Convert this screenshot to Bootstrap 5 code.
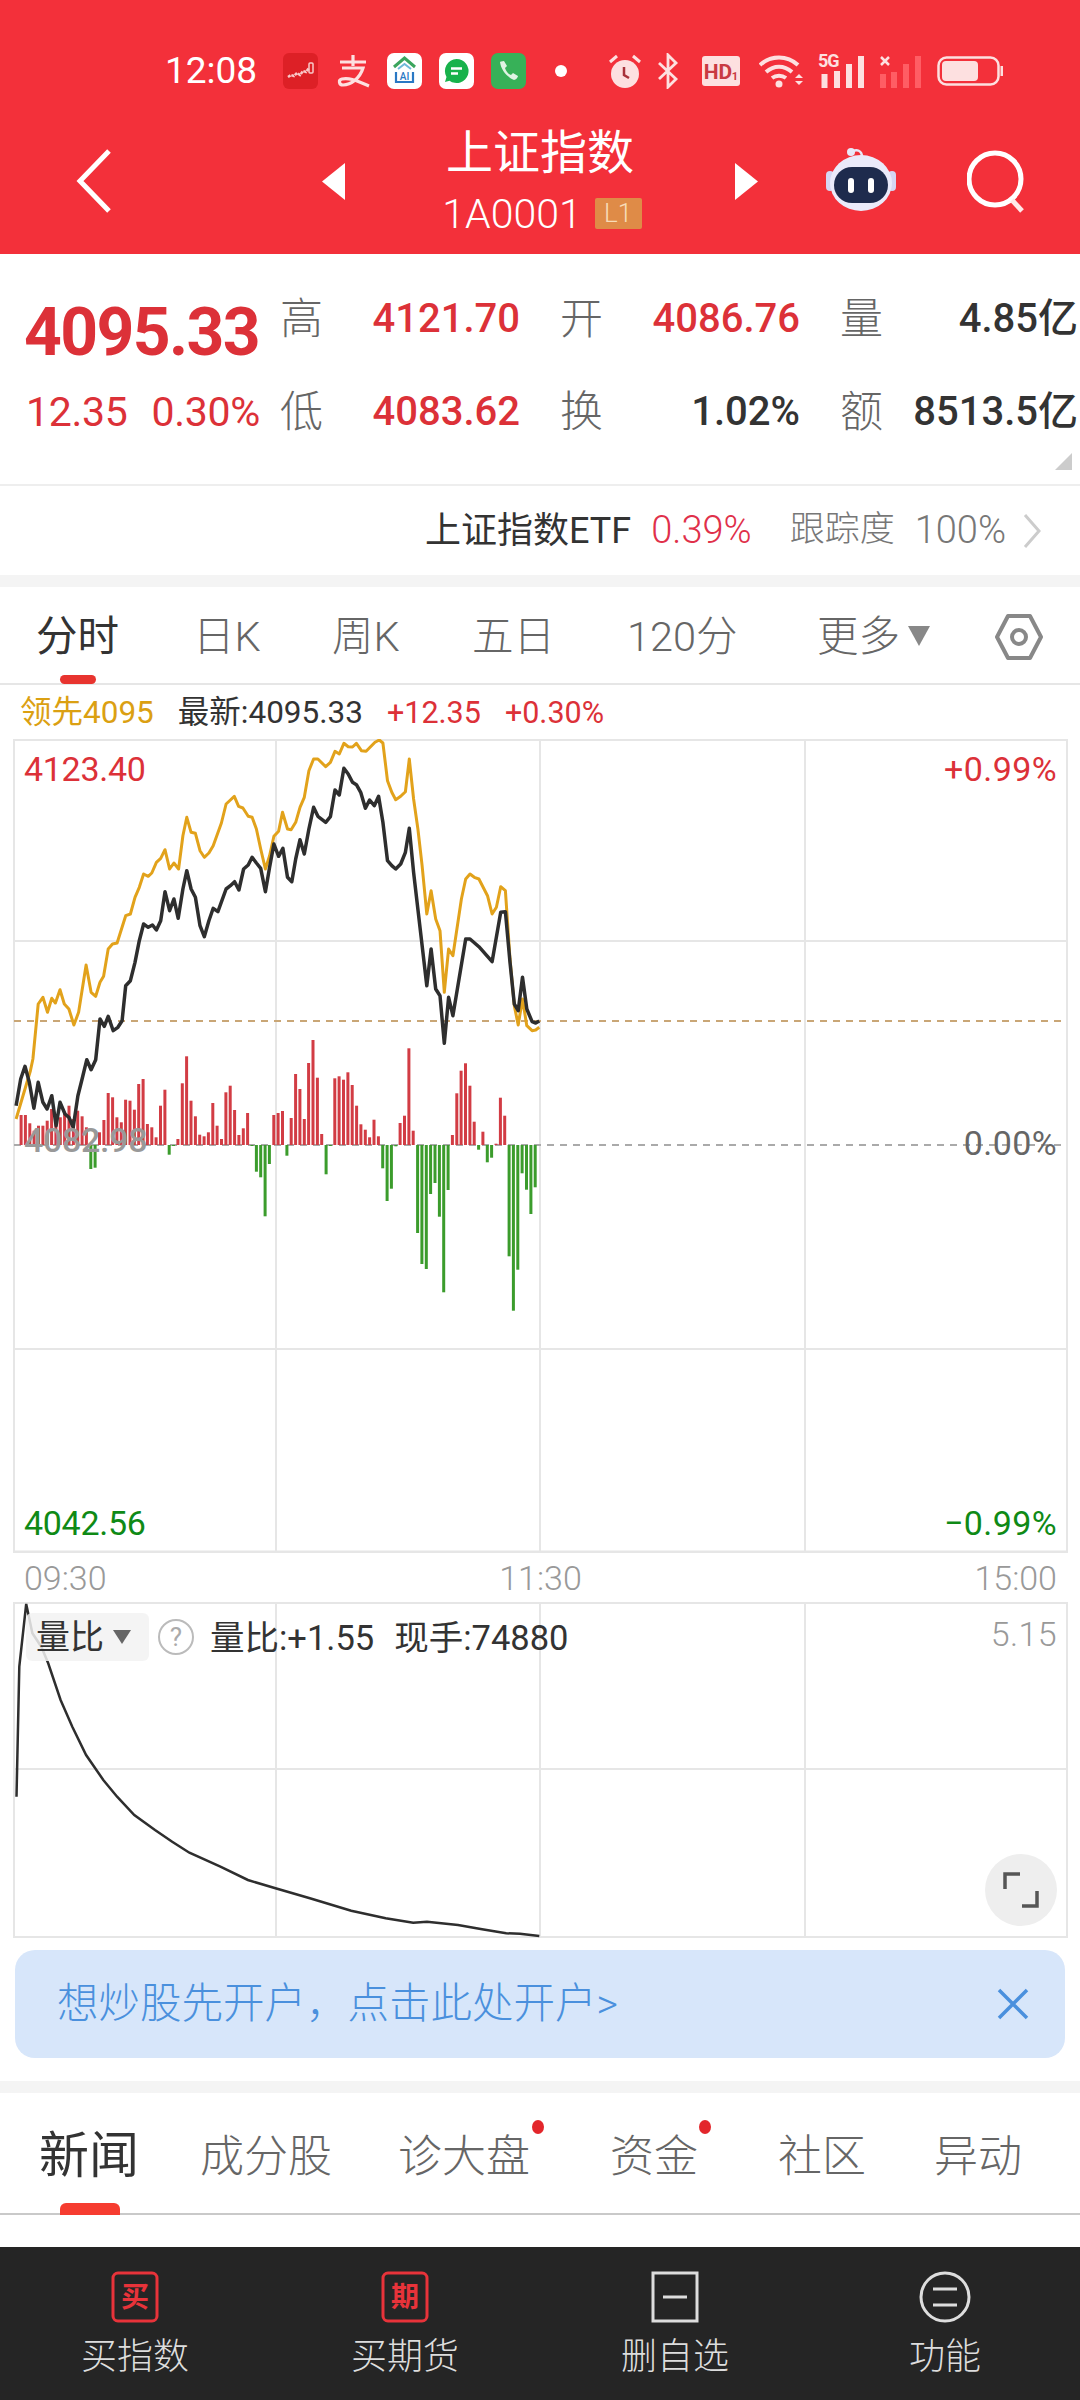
<!DOCTYPE html>
<html lang="zh-CN">
<head>
<meta charset="UTF-8">
<meta name="viewport" content="width=device-width, initial-scale=1.0">
<title>上证指数</title>
<link href="https://cdn.jsdelivr.net/npm/bootstrap@5.3.3/dist/css/bootstrap.min.css" rel="stylesheet" crossorigin="anonymous">
<script src="https://cdn.jsdelivr.net/npm/bootstrap@5.3.3/dist/js/bootstrap.bundle.min.js" crossorigin="anonymous"></script>
<style>
body { width:1080px; height:2400px; margin:0; overflow:hidden; background:#fff; font-family:Roboto,"Noto Sans CJK SC",sans-serif; color:#333; }
svg { display:block; }
.up { color:#dc3138; }
.down { color:#0f8a16; }
.muted { color:#999; }

/* header */
.app-head { height:254px; background:#f3303a; color:#fff; }
.status-row { height:50px; padding-left:165px; position:relative; top:46px; }
.status-time { font-size:37px; width:118px; line-height:50px; }
.title-row { display:grid; grid-template-columns:322px 23px 390px 23px 67px 72px 70px 58px; align-items:center; height:130px; position:relative; top:66px; }
.back-btn { padding-left:76px; }
.title-main { font-size:47px; line-height:56px; font-weight:400; margin-bottom:9px; }
.title-code { font-size:41px; line-height:48px; font-weight:300; gap:13px; padding-left:4px; }
.lv-tag { background:#df8b47; color:#f8dcb8; font-size:26px; width:47px; height:31px; line-height:31px; border-radius:2px; text-align:center; }

/* quote */
.quote-box { height:232px; display:grid; grid-template-columns:280px 52px 188px 40px 40px 200px 40px 40px 198px; grid-template-rows:46px 46px; row-gap:47px; padding-top:42px; border-bottom:2px solid #eee; position:relative; align-content:start; }
.price-big { font-size:66px; font-weight:700; padding-left:24px; letter-spacing:-1.6px; line-height:46px; color:#dc3138; margin-top:14px; }
.price-sub { font-size:41px; padding-left:26px; color:#dc3138; letter-spacing:-.3px; line-height:46px; white-space:nowrap; }
.price-sub span { margin-left:24px; }
.q-label { font-size:43px; color:#666; line-height:46px; font-weight:300; }
.q-val { font-size:40px; text-align:right; line-height:46px; font-weight:500; white-space:nowrap; }
.q-dark { color:#333; }
.q-corner { position:absolute; right:8px; bottom:14px; width:0; height:0; border-left:17px solid transparent; border-bottom:17px solid #ccc; }

/* etf */
.etf-row { height:89px; padding-right:38px; font-size:36px; }
.etf-pct { color:#e0304a; font-size:38px; font-weight:300; margin-left:20px; margin-right:38px; }
.etf-grey { color:#777; font-weight:300; font-size:35px; }
.etf-num { font-size:38px; margin-left:20px; }
.gap-band { height:12px; background:#f4f4f4; }

/* period tabs */
.period-tabs { display:grid; grid-template-columns:157px 139px 140px 155px 190px 177px 1fr; height:98px; padding:4px 0 0 36px; border-bottom:2px solid #e6e6e6; align-items:center; font-size:41.500px; color:#666; font-weight:300; position:relative; }
.period-tabs .on { color:#333; font-weight:400; position:relative; }
.period-tabs .on::after { content:""; position:absolute; left:24px; bottom:-16px; width:36px; height:9px; border-radius:5px; background:#e8342f; }
.more-caret { display:inline-block; width:0; height:0; border-left:11px solid transparent; border-right:11px solid transparent; border-top:20px solid #888; margin-left:8px; position:relative; top:-5px; }

/* chart info */
.info-row { height:54px; padding:1px 0 0 20px; font-size:31.500px; align-items:center; gap:24px; }
.info-row .up { font-size:30.500px; }
.lead-tag { color:#dba012; }
.chart-main { position:relative; height:814px; }
.chart-tag { position:absolute; font-size:34px; line-height:40px; letter-spacing:.4px; }
.left-tag { letter-spacing:-.3px; }
.base-tag { color:#999; font-weight:500; }
.time-row { height:49px; padding:0 23px 0 24px; font-size:34px; color:#999; font-weight:300; line-height:50px; }
.chart-sub { position:relative; height:336px; }
.ratio-pick { position:absolute; left:26px; top:11px; width:123px; height:48px; background:rgba(242,242,242,.85); border-radius:6px; font-size:34px; line-height:48px; padding-left:10px; color:#333; }
.ratio-pick i { display:inline-block; width:0; height:0; border-left:9px solid transparent; border-right:9px solid transparent; border-top:14px solid #666; margin-left:9px; position:relative; top:-5px; }
.ratio-help { position:absolute; left:158px; top:17px; width:36px; height:36px; border:2px solid #bbb; border-radius:50%; text-align:center; color:#aaa; font-size:26px; line-height:32px; }
.ratio-text { position:absolute; left:210px; top:14px; font-size:34.500px; line-height:44px; gap:20px; white-space:nowrap; }
.expand-btn { position:absolute; left:985px; top:252px; width:72px; height:72px; background:#eee; border-radius:50%; }

/* open account banner */
.open-banner { height:108px; margin:12px 15px 0; background:#d7e6fa; border-radius:20px; color:#4a90dd; font-size:41.500px; padding:0 36px 0 42px; font-weight:300; }
.news-tabs { position:relative; height:122px; border-bottom:2px solid #c9c9c9; font-size:44px; color:#666; font-weight:300; }
.news-tabs span { position:absolute; top:36px; line-height:56px; white-space:nowrap; }
.news-tabs .on { font-size:50px; color:#333; left:39px; top:35px; font-weight:400; }
.news-mark { position:absolute; left:60px; bottom:-2px; width:60px; height:12px; border-radius:6px 6px 0 0; background:#f63c30; }
.news-dot { position:absolute; top:27px; width:12px; height:14px; border-radius:50%; background:#e3262b; }

/* bottom bar */
.foot-bar { position:absolute; left:0; right:0; top:2247px; height:153px; background:#252525; color:#ddd; font-size:36px; font-weight:300; }
.foot-icon { height:52px; margin:24px auto 7px; }
</style>
</head>
<body>

<header class="app-head">
  <div class="status-row d-flex align-items-center">
    <div class="status-time">12:08</div>
    <div class="d-flex align-items-center">
      <svg width="35" height="36" viewBox="0 0 35 36" style="margin-right:19px"><rect width="35" height="36" rx="6" fill="#dd2026"/><path d="M5 24l3-2 3 1 3-3 3 2 3-4 3 1 3-4" fill="none" stroke="#f9c9c9" stroke-width="2.500" stroke-dasharray="3 1"/><rect x="26" y="10" width="4" height="10" rx="1" fill="none" stroke="#f9c9c9" stroke-width="1.500"/></svg>
      <svg width="34" height="34" viewBox="0 0 34 34" style="margin-right:16px"><path d="M16 1v11M3 8h26M5 14h21C23 24 14 31 6 31c-4 0-5-5-1-6 8-2 17 3 27 7" fill="none" stroke="#fde0e0" stroke-width="3.200"/></svg>
      <svg width="35" height="36" viewBox="0 0 35 36" style="margin-right:17px"><rect width="35" height="36" rx="7" fill="#fff"/><path d="M7 14L17.500 5 28 14" fill="none" stroke="#3ba55d" stroke-width="3"/><path d="M9 19v10h17V19" fill="none" stroke="#2a78c4" stroke-width="2.200"/><path d="M11 16l6.500-5 6.500 5" fill="none" stroke="#6fb8d8" stroke-width="2"/><text x="17.500" y="27" font-size="10" font-weight="500" text-anchor="middle" fill="#2a78c4" font-family="Roboto">AI</text></svg>
      <svg width="35" height="36" viewBox="0 0 35 36" style="margin-right:17px"><rect width="35" height="36" rx="7" fill="#fff"/><path d="M17.500 6a12 12 0 1 1-7 21.700L6 29l1.500-5A12 12 0 0 1 17.500 6z" fill="#18b24b"/><path d="M12 15.500h11M12 20.500h7" stroke="#fff" stroke-width="2.500"/></svg>
      <svg width="35" height="36" viewBox="0 0 35 36" style="margin-right:29px"><rect width="35" height="36" rx="7" fill="#37b158"/><path d="M9 9c1 8 7 15 14 18 2 0 4-3 4-4l-5-3-2 2c-3-1-5-4-6-7l2-2-3-5c-2 0-4 1-4 1z" fill="#dff3e3"/></svg>
      <svg width="12" height="12" style="margin-right:41px"><circle cx="6" cy="6" r="6" fill="#fff"/></svg>
      <svg width="34" height="36" viewBox="0 0 34 36" style="margin-right:14px"><circle cx="17" cy="21" r="14" fill="#fde0e0"/><path d="M16 14v8l5 3" fill="none" stroke="#a8323a" stroke-width="2.500"/><path d="M2 9l7-6M32 9l-7-6" stroke="#fde0e0" stroke-width="3"/></svg>
      <svg width="24" height="36" viewBox="0 0 24 36" style="margin-right:22px"><path d="M3 10l17 16-8 8V2l8 8L3 26" fill="none" stroke="#fde0e0" stroke-width="2.800"/></svg>
      <svg width="38" height="30" viewBox="0 0 38 30" style="margin-right:19px"><rect width="38" height="30" rx="3" fill="#fde0e0"/><text x="16" y="23" font-size="21" font-weight="700" text-anchor="middle" fill="#c93a42" font-family="Roboto">HD</text><text x="33" y="24" font-size="11" font-weight="700" text-anchor="middle" fill="#c93a42" font-family="Roboto">1</text></svg>
      <svg width="44" height="34" viewBox="0 0 44 34" style="margin-right:15px"><path d="M1 11c11-10 27-10 38 0M7 18c8-7 18-7 26 0M13 24c4-3 10-3 14 0" fill="none" stroke="#fde0e0" stroke-width="4"/><circle cx="20" cy="30" r="3.500" fill="#fde0e0"/><path d="M36 24l4-4 4 4zM36 27l4 4 4-4z" fill="#fde0e0"/></svg>
      <div class="position-relative" style="width:47px;height:34px;margin-right:14px">
        <svg width="47" height="34" viewBox="0 0 47 34"><path d="M6.500 34V20M19 34V17M31 34V10M43 34V2" stroke="#fde0e0" stroke-width="6"/></svg>
        <span class="position-absolute" style="left:0;top:-7px;font-size:18px;font-weight:700;color:#fde0e0;letter-spacing:-1px">5G</span>
      </div>
      <svg width="42" height="34" viewBox="0 0 42 34" style="margin-right:16px"><path d="M4 34V20M15 34V18M27 34V10M39 34V2" stroke="#ff5d64" stroke-width="6"/><path d="M2 3l8 8M10 3l-8 8" stroke="#fde0e0" stroke-width="2.500"/></svg>
      <svg width="66" height="30" viewBox="0 0 66 30"><rect x="1.500" y="1.500" width="60" height="27" rx="8" fill="none" stroke="#fde0e0" stroke-width="2.500"/><rect x="5" y="5" width="36" height="20" rx="4" fill="#fde0e0"/><path d="M65 10v10" stroke="#fde0e0" stroke-width="3"/></svg>
    </div>
  </div>
  <div class="title-row">
    <div class="back-btn"><svg width="36" height="66" viewBox="0 0 36 66"><path d="M33 3L4 33l29 30" fill="none" stroke="#fff" stroke-width="5"/></svg></div>
    <svg width="23" height="37" viewBox="0 0 23 37"><path d="M23 0v37L0 18.500z" fill="#fff"/></svg>
    <div class="d-flex flex-column align-items-center">
      <div class="title-main">上证指数</div>
      <div class="title-code d-flex align-items-center">1A0001<span class="lv-tag">L1</span></div>
    </div>
    <svg width="23" height="37" viewBox="0 0 23 37"><path d="M0 0v37l23-18.500z" fill="#fff"/></svg>
    <div></div>
    <svg width="72" height="68" viewBox="0 0 72 68"><path d="M26 5c6-4 11-1 11 5" fill="none" stroke="#e8e8f8" stroke-width="2.500"/><circle cx="26" cy="5" r="4" fill="#e8e8f8"/><rect x="1" y="24" width="8" height="20" rx="4" fill="#d5d6f3"/><rect x="63" y="24" width="8" height="20" rx="4" fill="#d5d6f3"/><ellipse cx="36" cy="36" rx="31" ry="28" fill="#eaeafa"/><rect x="9" y="20" width="54" height="36" rx="18" fill="#1e2b4d"/><rect x="23" y="31" width="6" height="15" rx="3" fill="#fff"/><rect x="43" y="31" width="6" height="15" rx="3" fill="#fff"/></svg>
    <div></div>
    <svg width="60" height="64" viewBox="0 0 60 64"><circle cx="28" cy="30" r="26" fill="none" stroke="#fff" stroke-width="5"/><path d="M45 51l10 11" stroke="#ffe9e9" stroke-width="5"/></svg>
  </div>
</header>

<section class="quote-box">
  <div class="price-big">4095.33</div>
  <div class="q-label">高</div><div class="q-val up">4121.70</div><div></div><div class="q-label">开</div><div class="q-val up">4086.76</div><div></div><div class="q-label">量</div><div class="q-val q-dark">4.85亿</div>
  <div class="price-sub">12.35<span>0.30%</span></div>
  <div class="q-label">低</div><div class="q-val up">4083.62</div><div></div><div class="q-label">换</div><div class="q-val q-dark">1.02%</div><div></div><div class="q-label">额</div><div class="q-val q-dark">8513.5亿</div>
  <div class="q-corner"></div>
</section>

<section class="etf-row d-flex align-items-center justify-content-end">
  <span>上证指数ETF</span>
  <span class="etf-pct">0.39%</span>
  <span class="etf-grey">跟踪度</span>
  <span class="etf-grey etf-num">100%</span>
  <svg class="ms-3" width="20" height="36" viewBox="0 0 20 36"><path d="M3 2l14 16L3 34" fill="none" stroke="#ccc" stroke-width="3"/></svg>
</section>
<div class="gap-band"></div>

<nav class="period-tabs">
  <span class="on">分时</span><span>日K</span><span>周K</span><span>五日</span><span>120分</span>
  <span>更多<i class="more-caret"></i></span>
  <svg width="50" height="48" viewBox="0 0 50 48"><path d="M14 3h22l11 21-11 21H14L3 24z" fill="none" stroke="#888" stroke-width="4" stroke-linejoin="round"/><circle cx="25" cy="24" r="7" fill="none" stroke="#888" stroke-width="4"/></svg>
</nav>

<div class="info-row d-flex">
  <span class="lead-tag">领先4095</span>
  <span>最新:4095.33</span>
  <span class="up">+12.35</span>
  <span class="up">+0.30%</span>
</div>

<div class="chart-main">
  <svg id="priceChart" width="1080" height="814" viewBox="0 740 1080 814"></svg>
  <span class="chart-tag left-tag up" style="left:24px;top:10px">4123.40</span>
  <span class="chart-tag up" style="right:23px;top:10px">+0.99%</span>
  <span class="chart-tag left-tag base-tag" style="left:24px;top:381px">4082.98</span>
  <span class="chart-tag" style="right:23px;top:384px;color:#666">0.00%</span>
  <span class="chart-tag left-tag down" style="left:24px;top:764px">4042.56</span>
  <span class="chart-tag down" style="right:23px;top:764px">−0.99%</span>
</div>

<div class="time-row d-flex justify-content-between"><span>09:30</span><span>11:30</span><span>15:00</span></div>

<div class="chart-sub">
  <svg id="ratioChart" width="1080" height="336" viewBox="0 1602 1080 336"></svg>
  <div class="ratio-pick">量比<i></i></div>
  <div class="ratio-help">?</div>
  <div class="ratio-text d-flex"><span>量比:+1.55</span><span>现手:74880</span></div>
  <span class="chart-tag muted" style="right:23px;top:12px;font-weight:300">5.15</span>
  <div class="expand-btn d-flex align-items-center justify-content-center">
    <svg width="36" height="36" viewBox="0 0 36 36"><path d="M2 17V2h15M34 19v15H19" fill="none" stroke="#555" stroke-width="3.500"/></svg>
  </div>
</div>

<div class="open-banner d-flex align-items-center justify-content-between">
  <span>想炒股先开户&#xFF0C;点击此处开户&gt;</span>
  <svg width="32" height="32" viewBox="0 0 32 32"><path d="M2 2l28 28M30 2L2 30" stroke="#4a90dd" stroke-width="3.500"/></svg>
</div>

<div class="gap-band" style="margin-top:23px"></div>

<nav class="news-tabs">
  <span class="on">新闻</span>
  <span style="left:200px">成分股</span>
  <span style="left:398px">诊大盘</span>
  <span style="left:610px">资金</span>
  <span style="left:778px">社区</span>
  <span style="left:934px">异动</span>
  <i class="news-dot" style="left:532px"></i>
  <i class="news-dot" style="left:699px"></i>
  <i class="news-mark"></i>
</nav>

<footer class="foot-bar row g-0 text-center">
  <div class="col-3">
    <svg class="foot-icon" width="48" height="52" viewBox="0 0 48 52"><rect x="2" y="2" width="44" height="48" rx="5" fill="none" stroke="#e8333a" stroke-width="3"/><text x="24" y="36" font-size="28" font-weight="700" text-anchor="middle" fill="#e8333a" font-family="'Noto Sans CJK SC'">买</text></svg>
    <div>买指数</div>
  </div>
  <div class="col-3">
    <svg class="foot-icon" width="48" height="52" viewBox="0 0 48 52"><rect x="2" y="2" width="44" height="48" rx="5" fill="none" stroke="#e8333a" stroke-width="3"/><text x="24" y="36" font-size="28" font-weight="700" text-anchor="middle" fill="#e8333a" font-family="'Noto Sans CJK SC'">期</text></svg>
    <div>买期货</div>
  </div>
  <div class="col-3">
    <svg class="foot-icon" width="48" height="52" viewBox="0 0 48 52"><rect x="2" y="2" width="44" height="48" fill="none" stroke="#ddd" stroke-width="3"/><path d="M12 26h24" stroke="#ddd" stroke-width="3"/></svg>
    <div>删自选</div>
  </div>
  <div class="col-3">
    <svg class="foot-icon" width="52" height="52" viewBox="0 0 52 52"><circle cx="26" cy="26" r="24" fill="none" stroke="#ddd" stroke-width="3"/><path d="M14 18h24M14 34h24" stroke="#ddd" stroke-width="3"/></svg>
    <div>功能</div>
  </div>
</footer>

<script>
// traces were read off the picture: x*2.8, (y-720)*3
const goldLine = [45,1200,85,1055,92,1020,107,855,120,835,133,880,145,838,155,852,168,812,180,855,193,870,207,918,220,880,241,738,255,820,268,832,280,790,290,772,303,690,315,675,328,672,352,590,365,585,378,535,390,505,402,465,415,472,425,462,438,430,450,418,462,392,475,450,487,432,500,450,512,350,523,295,535,340,547,343,560,395,572,415,585,402,597,380,620,312,633,255,645,243,656,232,668,262,680,267,695,292,706,295,718,330,730,390,743,450,755,410,767,352,780,337,791,280,805,330,815,332,828,310,840,265,852,235,865,155,878,120,890,120,912,143,925,130,938,97,950,105,963,73,975,83,987,84,998,73,1012,95,1025,97,1050,70,1062,63,1072,72,1085,185,1097,220,1108,242,1122,232,1135,218,1146,120,1158,240,1170,330,1182,440,1195,585,1207,515,1220,600,1232,635,1244,820,1256,690,1268,710,1292,540,1304,480,1316,465,1328,475,1341,480,1365,530,1378,585,1390,565,1402,503,1415,515,1428,720,1440,860,1451,918,1463,840,1475,920,1490,935,1500,933,1510,925];
const blackLine = [45,1160,58,1080,70,1042,82,1090,95,1168,107,1090,120,1150,132,1170,145,1130,157,1220,168,1150,182,1185,193,1195,205,1225,218,1130,230,1080,243,1022,255,1052,268,1022,280,900,292,922,303,892,317,935,330,925,342,905,352,800,365,785,378,730,390,665,402,615,415,625,427,618,438,633,450,605,462,518,475,575,487,540,499,598,512,510,523,455,535,510,547,535,560,620,572,653,585,605,597,568,610,578,633,510,645,500,657,488,669,513,682,450,695,438,706,415,718,432,730,448,743,518,755,445,767,375,780,412,792,388,805,475,817,488,828,420,840,362,852,405,865,330,878,265,890,292,912,310,925,293,938,213,950,228,963,148,975,165,987,190,998,197,1010,220,1023,268,1035,243,1048,260,1060,232,1072,310,1085,425,1097,440,1108,450,1122,435,1135,400,1146,328,1158,460,1195,800,1207,690,1220,810,1232,830,1244,973,1256,835,1268,890,1304,660,1316,660,1341,683,1378,728,1402,580,1415,578,1428,730,1440,855,1451,875,1463,775,1475,870,1490,908,1500,912,1510,906];
// volume bars, top edge y of each one at x*2.8; baseline is y=318, bars below it are green
const barTops = [228,228,253,275,260,260,245,210,225,235,225,200,240,215,232,265,390,386,280,243,162,175,235,250,182,185,212,135,120,255,265,295,200,152,347,321,300,133,52,185,232,287,292,280,192,260,300,160,140,213,288,268,222,321,398,415,532,375,228,222,216,350,237,105,150,240,72,3,116,285,406,321,118,112,122,100,138,200,256,272,295,242,292,388,486,449,322,252,230,28,275,582,675,690,465,432,533,760,453,288,163,95,73,140,248,332,278,370,356,314,176,230,652,815,692,403,452,525,445];
const ratioLine = [24,890,28,500,38,312,47,400,60,440,70,490,88,600,105,680,125,765,150,840,170,890,195,945,225,990,250,1025,275,1058,320,1100,360,1140,400,1165,450,1195,510,1232,560,1255,600,1268,620,1265,665,1275,700,1288,735,1300,755,1301,783,1308];

function toPoints(arr, fx, fy) {
  let out = [];
  for (let i = 0; i < arr.length; i += 2) out.push(fx(arr[i]).toFixed(1) + "," + fy(arr[i + 1]).toFixed(1));
  return out.join(" ");
}
const gridLine = (x1, y1, x2, y2, w) => `<line x1="${x1}" y1="${y1}" x2="${x2}" y2="${y2}" stroke="#e6e6e6" stroke-width="${w}"/>`;

let s = "";
s += gridLine(13, 741, 1068, 741, 2) + gridLine(13, 942, 1068, 942, 2) + gridLine(13, 1350, 1068, 1350, 2) + gridLine(13, 1553, 1068, 1553, 3);
[14, 276, 540, 805, 1067].forEach(x => s += gridLine(x, 740, x, 1553, 2));
s += '<line x1="14" y1="1022" x2="1067" y2="1022" stroke="#c9a676" stroke-width="2" stroke-dasharray="7 6"/>';
s += '<line x1="14" y1="1146" x2="1067" y2="1146" stroke="#aaa" stroke-width="2" stroke-dasharray="7 6"/>';
barTops.forEach((top, i) => {
  const x = (59 + 12.2 * i) / 2.8 - 1.5;
  const h = Math.abs(top - 318) / 3;
  const y = top < 318 ? 1146 - h : 1146;
  s += `<rect x="${x.toFixed(1)}" y="${y.toFixed(1)}" width="3" height="${h.toFixed(1)}" fill="${top < 318 ? "#d23c44" : "#3b9c2c"}"/>`;
});
const fx = x => x / 2.8, fy = y => 720 + y / 3;
s += `<polyline points="${toPoints(goldLine, fx, fy)}" fill="none" stroke="#e2a21b" stroke-width="3" stroke-linejoin="round"/>`;
s += `<polyline points="${toPoints(blackLine, fx, fy)}" fill="none" stroke="#2e2e2e" stroke-width="3.500" stroke-linejoin="round"/>`;
document.getElementById("priceChart").innerHTML = s;

let r = gridLine(13, 1603, 1068, 1603, 2) + gridLine(13, 1769, 1068, 1769, 2) + gridLine(13, 1937, 1068, 1937, 2);
[14, 276, 540, 805, 1067].forEach(x => r += gridLine(x, 1603, x, 1937, 2));
r += `<polyline points="${toPoints(ratioLine, x => x / 1.452, y => 1500 + y / 3)}" fill="none" stroke="#2e2e2e" stroke-width="2.500"/>`;
document.getElementById("ratioChart").innerHTML = r;
</script>
</body>
</html>
